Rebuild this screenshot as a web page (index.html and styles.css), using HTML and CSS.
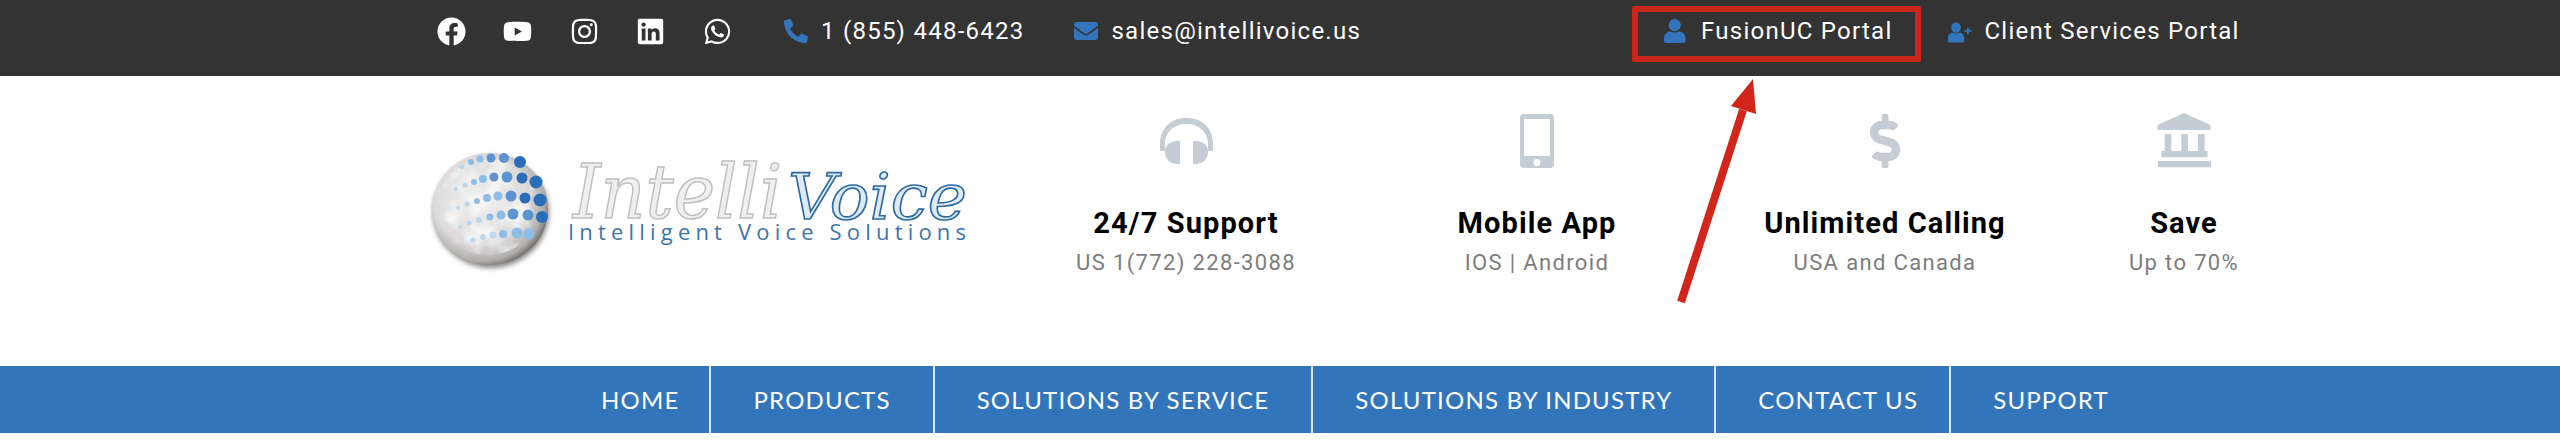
FILE: index.html
```html
<!DOCTYPE html>
<html>

<head>
	<title>IntelliVoice</title>
	<link rel="stylesheet" href="styles.css">
</head>

<body>

<div class="topBar">
	<div class="socialLinks">
		<a class="socialLink"><svg class="socialIcon" viewBox="0 0 512 512"><path d="M504 256C504 119 393 8 256 8S8 119 8 256c0 123.78 90.69 226.38 209.25 245V327.69h-63V256h63v-54.64c0-62.15 37-96.48 93.67-96.48 27.14 0 55.52 4.84 55.52 4.84v61h-31.28c-30.8 0-40.41 19.12-40.41 38.73V256h68.78l-11 71.69h-57.78V501C413.31 482.38 504 379.78 504 256z"/></svg></a>
		<a class="socialLink"><svg class="socialIcon" viewBox="0 0 576 512"><path d="M549.655 124.083c-6.281-23.65-24.787-42.276-48.284-48.597C458.781 64 288 64 288 64S117.22 64 74.629 75.486c-23.497 6.322-42.003 24.947-48.284 48.597-11.412 42.867-11.412 132.305-11.412 132.305s0 89.438 11.412 132.305c6.281 23.65 24.787 41.5 48.284 47.821C117.22 448 288 448 288 448s170.78 0 213.371-11.486c23.497-6.321 42.003-24.171 48.284-47.821 11.412-42.867 11.412-132.305 11.412-132.305s0-89.438-11.412-132.305zm-317.51 213.508V175.185l142.739 81.205-142.739 81.201z"/></svg></a>
		<a class="socialLink"><svg class="socialIcon" viewBox="0 0 448 512"><path d="M224.1 141c-63.6 0-114.9 51.3-114.9 114.9s51.3 114.9 114.9 114.9S339 319.5 339 255.9 287.7 141 224.1 141zm0 189.6c-41.1 0-74.7-33.5-74.7-74.7s33.5-74.7 74.7-74.7 74.7 33.5 74.7 74.7-33.6 74.7-74.7 74.7zm146.4-194.3c0 14.9-12 26.8-26.8 26.8-14.9 0-26.8-12-26.8-26.8s12-26.8 26.8-26.8 26.8 12 26.8 26.8zm76.1 27.2c-1.7-35.9-9.9-67.7-36.2-93.9-26.2-26.2-58-34.4-93.9-36.2-37-2.1-147.9-2.1-184.9 0-35.8 1.7-67.6 9.9-93.9 36.1s-34.4 58-36.2 93.9c-2.1 37-2.1 147.9 0 184.9 1.7 35.9 9.9 67.7 36.2 93.9s58 34.4 93.9 36.2c37 2.1 147.9 2.1 184.9 0 35.9-1.7 67.7-9.9 93.9-36.2 26.2-26.2 34.4-58 36.2-93.9 2.1-37 2.1-147.8 0-184.8zM398.8 388c-7.8 19.6-22.9 34.7-42.6 42.6-29.5 11.7-99.5 9-132.1 9s-102.7 2.6-132.1-9c-19.6-7.8-34.7-22.9-42.6-42.6-11.7-29.5-9-99.5-9-132.1s-2.6-102.7 9-132.1c7.8-19.6 22.9-34.7 42.6-42.6 29.5-11.7 99.5-9 132.1-9s102.7-2.6 132.1 9c19.6 7.8 34.7 22.9 42.6 42.6 11.7 29.5 9 99.5 9 132.1s2.7 102.7-9 132.1z"/></svg></a>
		<a class="socialLink"><svg class="socialIcon" viewBox="0 0 448 512"><path d="M416 32H31.9C14.3 32 0 46.5 0 64.3v383.4C0 465.5 14.3 480 31.9 480H416c17.6 0 32-14.5 32-32.3V64.3c0-17.8-14.4-32.3-32-32.3zM135.4 416H69V202.2h66.5V416zm-33.2-243c-21.3 0-38.5-17.3-38.5-38.5S80.9 96 102.2 96c21.2 0 38.5 17.3 38.5 38.5 0 21.3-17.2 38.5-38.5 38.5zm282.1 243h-66.4V312c0-24.8-.5-56.7-34.5-56.7-34.6 0-39.9 27-39.9 54.9V416h-66.4V202.2h63.7v29.2h.9c8.9-16.8 30.6-34.5 62.9-34.5 67.2 0 79.7 44.3 79.7 101.9V416z"/></svg></a>
		<a class="socialLink"><svg class="socialIcon" viewBox="0 0 448 512"><path d="M380.9 97.1C339 55.1 283.2 32 223.9 32c-122.4 0-222 99.6-222 222 0 39.1 10.2 77.3 29.6 111L0 480l117.7-30.9c32.4 17.7 68.9 27 106.1 27h.1c122.3 0 224.1-99.6 224.1-222 0-59.3-25.2-115-67.1-157zm-157 341.6c-33.2 0-65.7-8.9-94-25.7l-6.7-4-69.8 18.3L72 359.2l-4.4-7c-18.5-29.4-28.2-63.3-28.2-98.2 0-101.7 82.8-184.5 184.6-184.5 49.3 0 95.6 19.2 130.4 54.1 34.8 34.9 56.2 81.2 56.1 130.5 0 101.8-84.9 184.6-186.6 184.6zm101.2-138.2c-5.5-2.8-32.8-16.2-37.9-18-5.1-1.9-8.8-2.8-12.5 2.8-3.7 5.6-14.3 18-17.6 21.8-3.2 3.7-6.5 4.2-12 1.4-32.6-16.3-54-29.1-75.5-66-5.7-9.8 5.7-9.1 16.3-30.3 1.8-3.7.9-6.9-.5-9.7-1.4-2.8-12.5-30.1-17.1-41.2-4.5-10.8-9.1-9.3-12.5-9.5-3.2-.2-6.9-.2-10.6-.2-3.7 0-9.7 1.4-14.8 6.9-5.1 5.6-19.4 19-19.4 46.3 0 27.3 19.9 53.7 22.6 57.4 2.8 3.7 39.1 59.7 94.8 83.8 35.2 15.2 49 16.5 66.6 13.9 10.7-1.6 32.8-13.4 37.4-26.4 4.6-13 4.6-24.1 3.2-26.4-1.3-2.5-5-3.9-10.5-6.6z"/></svg></a>
	</div>

	<a class="contactLink contactPhone">
		<svg class="contactIcon" viewBox="0 0 512 512"><path d="M497.39 361.8l-112-48a24 24 0 0 0-28 6.9l-49.6 60.6A370.66 370.66 0 0 1 130.6 204.11l60.6-49.6a23.94 23.94 0 0 0 6.9-28l-48-112A24.16 24.16 0 0 0 122.6.61l-104 24A24 24 0 0 0 0 48c0 256.5 207.9 464 464 464a24 24 0 0 0 23.4-18.6l24-104a24.29 24.29 0 0 0-14.01-27.6z"/></svg>
		1 (855) 448-6423
	</a>
	<a class="contactLink contactMail">
		<svg class="contactIcon" viewBox="0 0 512 512"><path d="M502.3 190.8c3.9-3.1 9.7-.2 9.7 4.7V400c0 26.5-21.5 48-48 48H48c-26.5 0-48-21.5-48-48V195.6c0-5 5.7-7.8 9.7-4.7 22.4 17.4 52.1 39.5 154.1 113.6 21.1 15.4 56.7 47.8 92.2 47.6 35.7.3 72-32.8 92.3-47.6 102-74.1 131.6-96.3 154-113.7zM256 320c23.2.4 56.6-29.2 73.4-41.4 132.7-96.3 142.8-104.7 173.4-128.7 5.8-4.5 9.2-11.5 9.2-18.9v-19c0-26.5-21.5-48-48-48H48C21.5 64 0 85.5 0 112v19c0 7.4 3.4 14.3 9.2 18.9 30.6 23.9 40.7 32.4 173.4 128.7 16.8 12.2 50.2 41.8 73.4 41.4z"/></svg>
		sales@intellivoice.us
	</a>

	<a class="contactLink portalFusion">
		<svg class="portalIcon" viewBox="0 0 24 24"><ellipse cx="10.700" cy="6.200" rx="6" ry="6.200"/><path d="M0 22v-3.500C0 15 3.500 12.500 6.500 12.500c2.800 1.300 5.600 1.300 8.400 0 3 0 6.500 2.500 6.500 6V22c0 1.200-.8 2-2 2H2c-1.200 0-2-.8-2-2z"/></svg>
		FusionUC Portal
	</a>
	<a class="contactLink portalClient">
		<svg class="portalIcon" viewBox="0 0 24 24"><ellipse cx="8" cy="8.500" rx="4.800" ry="5.200"/><path d="M0 22v-3.500c0-2.800 2.500-4.800 4.800-4.800 2.100 1 4.300 1 6.400 0 2.300 0 5 2 5 4.800V22c0 1-.7 1.500-1.500 1.500h-13C.7 23.500 0 23 0 22z"/><path d="M19 8.700v2.200h-2.500v1.800H19v2.300h1.800v-2.300H23.500v-1.800h-2.700V8.700z"/></svg>
		Client Services Portal
	</a>
</div>

<div class="header">
	<svg class="logo" viewBox="0 0 540 130">
		<defs>
			<radialGradient id="globeFill" cx="0.42" cy="0.42" r="0.62">
				<stop offset="0" stop-color="#f2f1f1"/>
				<stop offset="0.65" stop-color="#dcdada"/>
				<stop offset="0.88" stop-color="#b0aeac"/>
				<stop offset="1" stop-color="#6a6765"/>
			</radialGradient>
			<filter id="globeShadow" x="-20%" y="-20%" width="140%" height="140%">
				<feGaussianBlur stdDeviation="2.500"/>
			</filter>
			<filter id="globeMottle" x="0" y="0" width="100%" height="100%">
				<feTurbulence type="fractalNoise" baseFrequency="0.05" numOctaves="3" seed="4"/>
				<feColorMatrix values="0 0 0 0 1  0 0 0 0 1  0 0 0 0 1  1.800 0 0 0 -0.700"/>
				<feComposite in2="SourceAlpha" operator="in"/>
			</filter>
			<filter id="dotSoft">
				<feGaussianBlur stdDeviation="0.500"/>
			</filter>
		</defs>

		<ellipse cx="61" cy="67" rx="58" ry="56" fill="#8a8886" filter="url(#globeShadow)"/>
		<ellipse cx="60" cy="64" rx="58" ry="56" fill="url(#globeFill)"/>
		<ellipse cx="58" cy="62" rx="50" ry="48" filter="url(#globeMottle)"/>

		<g filter="url(#dotSoft)">
			<g class="dotsDark">
				<circle cx="90" cy="17" r="6"/><circle cx="106" cy="37" r="6.500"/><circle cx="110" cy="55" r="6.500"/><circle cx="112" cy="72" r="6"/>
				<circle cx="92" cy="33" r="5.500"/><circle cx="95" cy="53" r="5.500"/>
			</g>
			<g class="dotsMid">
				<circle cx="74" cy="13" r="5"/><circle cx="77" cy="32" r="5.500"/><circle cx="81" cy="51" r="5.500"/><circle cx="83" cy="69" r="5.500"/><circle cx="98" cy="70" r="5.500"/>
				<circle cx="61" cy="13" r="4.500"/><circle cx="64" cy="32" r="4.500"/>
			</g>
			<g class="dotsLight">
				<circle cx="50" cy="14" r="3.500"/><circle cx="53" cy="34" r="4"/><circle cx="57" cy="53" r="4"/><circle cx="68" cy="51" r="4.500"/><circle cx="71" cy="70" r="4.500"/><circle cx="60" cy="72" r="3.500"/>
				<circle cx="99" cy="89" r="5.500"/><circle cx="87" cy="88" r="5.500"/><circle cx="73" cy="89" r="4"/>
				<circle cx="41" cy="17" r="3"/><circle cx="44" cy="37" r="3"/><circle cx="47" cy="56" r="3"/>
			</g>
			<g class="dotsPale">
				<circle cx="32" cy="22" r="2.500"/><circle cx="35" cy="40" r="2.500"/><circle cx="37" cy="59" r="2.500"/><circle cx="39" cy="78" r="2.500"/><circle cx="49" cy="75" r="3"/><circle cx="63" cy="90" r="3.500"/><circle cx="53" cy="92" r="3"/>
				<circle cx="26" cy="44" r="2"/><circle cx="28" cy="63" r="2"/><circle cx="30" cy="82" r="2"/><circle cx="43" cy="95" r="2.500"/>
			</g>
		</g>

		<text class="logoIntelli" x="143" y="73" textLength="209" lengthAdjust="spacingAndGlyphs">Intelli</text>
		<text class="logoVoice" x="358" y="74" textLength="179" lengthAdjust="spacingAndGlyphs">Voice</text>
		<text class="logoTagline" x="138" y="95" textLength="398">Intelligent Voice Solutions</text>
	</svg>

	<div class="feature featureSupport">
		<svg class="featureIcon" viewBox="0 0 54 54">
			<path d="M1 37V30C1 14 12 4 27.500 4S54 14 54 30v7h-5v-7C49 18 40 10 27.500 10S6 18 6 30v7z"/>
			<path d="M21 27v23h-3C11 50 6 45 6 38c0-6 4-11 12-11z"/>
			<path d="M34 27v23h3c7 0 12-5 12-12 0-6-4-11-12-11z"/>
		</svg>
		<div class="featureTitle">24/7 Support</div>
		<div class="featureText">US 1(772) 228-3088</div>
	</div>

	<div class="feature featureMobile">
		<svg class="featureIcon" viewBox="0 0 54 54">
			<path fill-rule="evenodd" d="M14 0h26a4 4 0 0 1 4 4v46a4 4 0 0 1-4 4H14a4 4 0 0 1-4-4V4a4 4 0 0 1 4-4zm0 5v37h26V5zm13 40a3.500 3.500 0 1 0 0 7 3.500 3.500 0 0 0 0-7z"/>
		</svg>
		<div class="featureTitle">Mobile App</div>
		<div class="featureText">IOS | Android</div>
	</div>

	<div class="feature featureCalling">
		<svg class="featureIcon" viewBox="-113 0 512 512"><path d="M209.200 233.400l-108-31.600C88.700 198.200 80 186.500 80 173.500c0-16.300 13.200-29.500 29.500-29.500h66.300c12.200 0 24.200 3.700 34.200 10.500 6.100 4.100 14.300 3.100 19.500-2l34.800-34c7.100-6.900 6.100-18.400-1.800-24.500C238 74.800 207.400 64.100 176 64V16c0-8.800-7.200-16-16-16h-32c-8.800 0-16 7.200-16 16v48h-2.500C45.800 64-5.400 118.700.5 183.600c4.200 46.100 39.400 83.600 83.800 96.600l102.500 30c12.500 3.700 21.200 15.300 21.200 28.300 0 16.300-13.200 29.500-29.500 29.500h-66.300C100 368 88 364.300 78 357.500c-6.100-4.100-14.300-3.100-19.500 2l-34.800 34c-7.100 6.900-6.100 18.400 1.800 24.500 24.500 19.200 55.100 29.900 86.500 30v48c0 8.800 7.200 16 16 16h32c8.800 0 16-7.200 16-16v-48.200c46.600-.9 90.300-28.600 105.700-72.700 21.500-61.600-14.600-124.800-72.500-141.700z"/></svg>
		<div class="featureTitle">Unlimited Calling</div>
		<div class="featureText">USA and Canada</div>
	</div>

	<div class="feature featureSave">
		<svg class="featureIcon" viewBox="0 0 54 54">
			<path d="M27 -1L53.500 11v5H.5v-5z"/>
			<path d="M7.700 20h6.600v17H7.700zM24.300 20h6.600v17h-6.600zM41 20h6.600v17H41z"/>
			<path d="M4.300 37h46.200v6.300H4.300z"/>
			<path d="M1 47h53v6.300H1z"/>
		</svg>
		<div class="featureTitle">Save</div>
		<div class="featureText">Up to 70%</div>
	</div>
</div>

<div class="navBar">
	<a class="navItem navHome">HOME</a>
	<a class="navItem">PRODUCTS</a>
	<a class="navItem">SOLUTIONS BY SERVICE</a>
	<a class="navItem">SOLUTIONS BY INDUSTRY</a>
	<a class="navItem navContact">CONTACT US</a>
	<a class="navItem">SUPPORT</a>
</div>

<!-- red callout drawn over the page -->
<div class="calloutBox"></div>
<svg class="calloutArrow" viewBox="0 0 100 240">
	<path d="M11 226L73 34" />
	<path class="calloutHead" d="M83 3L61 30l25 8z" />
</svg>

</body>
</html>
```

FILE: styles.css
```css
body
{
	margin: 0px;
	background: white;
	font-family: Roboto, "Liberation Sans", sans-serif;
	position: relative;
}

/* top dark bar */

.topBar
{
	display: flex;
	align-items: center;
	height: 76px;
	padding: 0px 0px 14px 438px;
	box-sizing: border-box;
	background: #333333;
	color: white;
	font-size: 24px;
	letter-spacing: 1.250px;
}

.socialLinks
{
	display: flex;
	gap: 40.500px;
}

.socialLink
{
	display: flex;
	width: 26px;
	justify-content: center;
}

.socialIcon
{
	display: block;
	flex-shrink: 0;
	width: 29px;
	height: 29px;
	fill: white;
}

.contactLink
{
	display: flex;
	align-items: center;
	white-space: nowrap;
}

.contactIcon
{
	width: 24px;
	height: 24px;
	margin-right: 13px;
	fill: #3375bb;
}

.portalIcon
{
	width: 24px;
	height: 24px;
	margin-right: 13px;
	fill: #3375bb;
}

.contactPhone
{
	margin-left: 54px;
}

.contactMail
{
	margin-left: 50px;
}

.portalFusion
{
	margin-left: 303px;
}

.portalClient
{
	margin-left: 55px;
}

/* logo and features */

.header
{
	display: flex;
	height: 290px;
	padding: 38px 0px 0px 430px;
	box-sizing: border-box;
}

.logo
{
	width: 540px;
	height: 130px;
	margin-top: 31px;
	flex-shrink: 0;
}

.dotsDark { fill: #2a6db8; }
.dotsMid { fill: #5c94d2; }
.dotsLight { fill: #8dbde6; }
.dotsPale { fill: #bcd6ec; }

.logoIntelli
{
	font-family: "DejaVu Serif", serif;
	font-style: italic;
	font-size: 75px;
	fill: #efefef;
	stroke: #bfbfbf;
	stroke-width: 1.500px;
}

.logoVoice
{
	font-family: "DejaVu Serif", serif;
	font-style: italic;
	font-size: 64px;
	fill: #dfeaf5;
	stroke: #2c6aa6;
	stroke-width: 1.600px;
}

.logoTagline
{
	font-family: "Open Sans", sans-serif;
	font-size: 22px;
	fill: #3f75ad;
}

.feature
{
	display: flex;
	flex-direction: column;
	align-items: center;
	flex-shrink: 0;
	white-space: nowrap;
}

.featureSupport { width: 218px; margin-left: 107px; }
.featureMobile { width: 180px; margin-left: 152px; }
.featureCalling { width: 250px; margin-left: 133px; }
.featureSave { width: 110px; margin-left: 119px; }

.featureIcon
{
	width: 54px;
	height: 54px;
	fill: #c4cdd5;
	overflow: visible;
}

.featureTitle
{
	margin-top: 38px;
	font-size: 29px;
	line-height: 34px;
	font-weight: 700;
	letter-spacing: 1.100px;
	color: black;
}

.featureText
{
	margin-top: 9px;
	font-size: 22px;
	line-height: 28px;
	letter-spacing: 1.350px;
	color: #7d7d7d;
}

/* blue nav */

.navBar
{
	display: flex;
	height: 67px;
	padding-left: 559px;
	background: #3375bb;
}

.navItem
{
	display: flex;
	align-items: center;
	padding: 0px 42px;
	border-right: 2px solid #d8e5f2;
	font-family: Lato, sans-serif;
	font-size: 24px;
	letter-spacing: 1.200px;
	color: white;
	white-space: nowrap;
}

.navHome
{
	padding-right: 30px;
}

.navContact
{
	padding-right: 31px;
}

.navItem:last-child
{
	border-right: none;
}

/* annotation */

.calloutBox
{
	position: absolute;
	left: 1632px;
	top: 6px;
	width: 289px;
	height: 56px;
	box-sizing: border-box;
	border: 6px solid #c9271a;
	border-radius: 2px;
}

.calloutArrow
{
	position: absolute;
	left: 1670px;
	top: 76px;
	width: 100px;
	height: 240px;
	fill: none;
	stroke: #d3261b;
	stroke-width: 8px;
}

.calloutHead
{
	fill: #d3261b;
	stroke: none;
}
```
